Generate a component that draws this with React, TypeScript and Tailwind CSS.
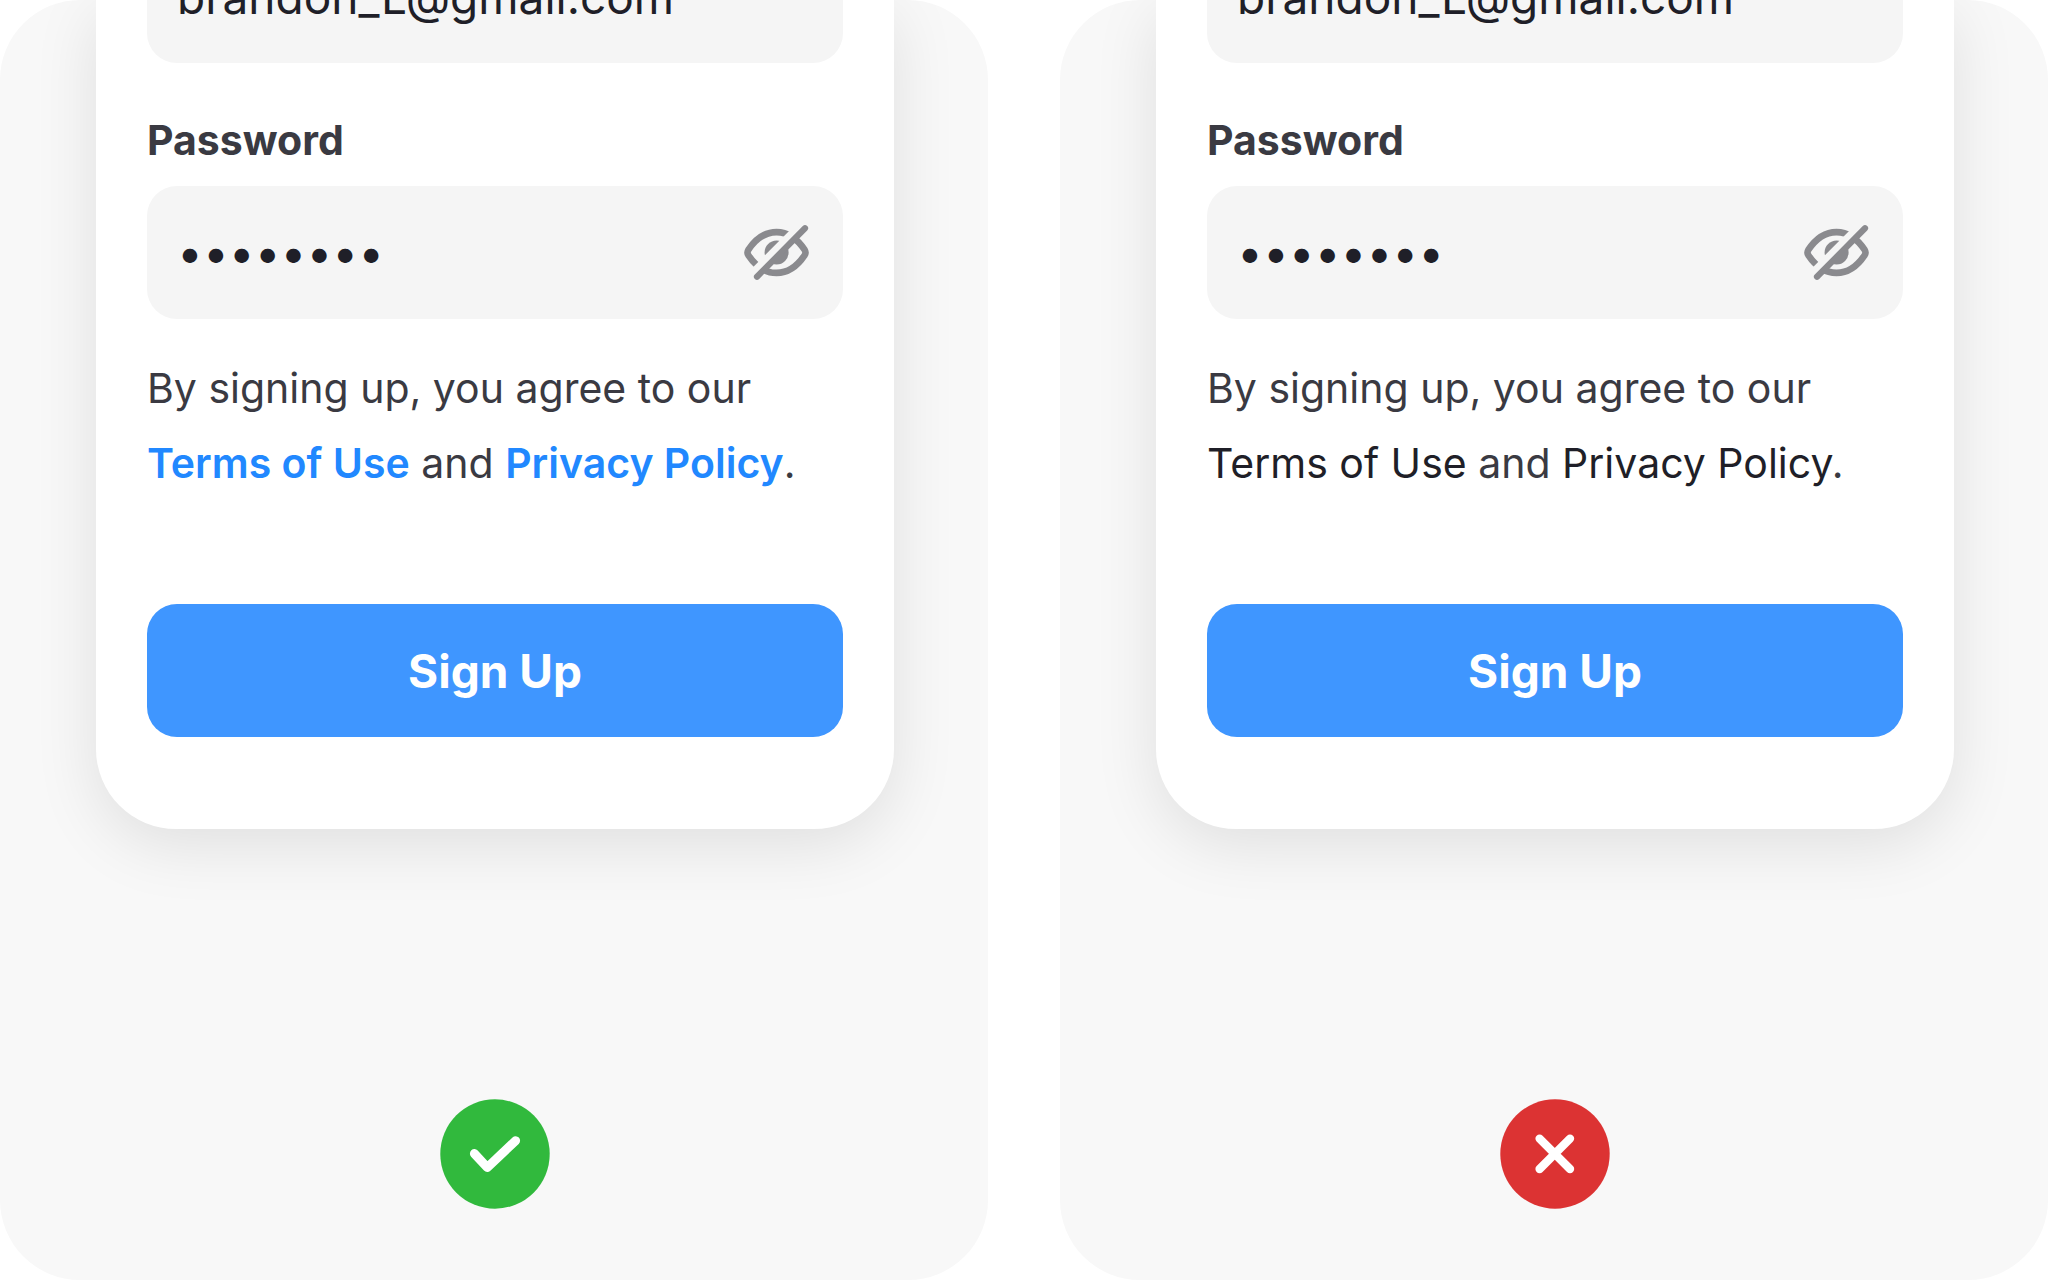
import React, { useId, useState } from 'react';

function EyeOffIcon() {
  const maskId = useId();

  return (
    <svg viewBox="0 0 66 56" className="h-14 w-[66px]" fill="none" aria-hidden="true">
      <mask id={maskId} maskUnits="userSpaceOnUse" x="0" y="0" width="66" height="56">
        <rect width="66" height="56" fill="white" />
        <path d="M-0.3 58.2 67.5 -9.8" stroke="black" strokeWidth="9.4" />
      </mask>
      <g mask={`url(#${maskId})`}>
        <path
          d="M32.5 7.1C20.5 7.1 11.2 14.6 4.3 24.9Q2.7 27.5 4.3 30.1C11.2 40.4 20.5 47.9 32.5 47.9C44.5 47.9 53.8 40.4 60.7 30.1Q62.3 27.5 60.7 24.9C53.8 14.6 44.5 7.1 32.5 7.1Z"
          stroke="#8a8a8e"
          strokeWidth="6.6"
        />
        <circle cx="32.6" cy="27.4" r="12" fill="#8a8a8e" />
      </g>
      <path d="M13 51.7 61 3.3" stroke="#8a8a8e" strokeWidth="6.2" strokeLinecap="round" />
    </svg>
  );
}

function CheckBadge() {
  return (
    <svg viewBox="0 0 110 110" className="size-[110px]" fill="none" role="img" aria-label="Do">
      <circle cx="55" cy="55" r="54.7" fill="#31b93d" />
      <path d="M34.4 54.6 47.3 68.5 75.6 41.7" stroke="white" strokeWidth="9" strokeLinecap="round" strokeLinejoin="round" />
    </svg>
  );
}

function CrossBadge() {
  return (
    <svg viewBox="0 0 110 110" className="size-[110px]" fill="none" role="img" aria-label="Don't">
      <circle cx="55" cy="55" r="54.7" fill="#dc3333" />
      <path d="M39.6 39.6 70 70M70 39.6 39.6 70" stroke="white" strokeWidth="8.4" strokeLinecap="round" />
    </svg>
  );
}

function SignUpForm({ highlightLinks }: { highlightLinks: boolean }) {
  const passwordId = useId();
  const [visible, setVisible] = useState(false);
  const linkClass = highlightLinks ? 'font-semibold text-[#2188ff]' : 'text-[#1f1f28]';

  return (
    <form
      className="overflow-hidden rounded-b-[80px] bg-white px-[51px] pb-[92px] shadow-[0_16px_64px_rgba(0,0,0,0.1)]"
      onSubmit={(e) => e.preventDefault()}
    >
      {/* The email field runs off the top edge of the card */}
      <input
        type="email"
        aria-label="Email"
        defaultValue="brandon_L@gmail.com"
        className="-mt-[70px] block h-[133px] w-full rounded-[30px] bg-[#f5f5f5] px-[30px] text-[46px] text-[#1f1f28] outline-none"
      />

      <label htmlFor={passwordId} className="mt-[53px] block text-[41px] leading-[48px] font-bold text-[#3a3a42]">
        Password
      </label>
      <div className="mt-[22px] flex h-[133px] items-center rounded-[30px] bg-[#f5f5f5] pr-[33px] pl-[30px]">
        <input
          id={passwordId}
          type={visible ? 'text' : 'password'}
          defaultValue="12345678"
          className="h-full min-w-0 flex-1 bg-transparent pb-0.5 text-[46px] text-[#1f1f28] outline-none"
        />
        <button type="button" aria-label="Show password" onClick={() => setVisible(!visible)}>
          <EyeOffIcon />
        </button>
      </div>

      <p className="mt-8 text-[41px] leading-[75px] text-[#3a3a42]">
        By signing up, you agree to our
        <br />
        <a href="#terms" className={linkClass}>Terms of Use</a> and{' '}
        <a href="#privacy" className={linkClass}>Privacy Policy</a>.
      </p>

      <button
        type="submit"
        className="mt-[103px] block h-[133px] w-full rounded-[30px] bg-[#3f96ff] pt-0.5 text-[46px] font-bold text-white"
      >
        Sign Up
      </button>
    </form>
  );
}

function Panel({ good }: { good: boolean }) {
  return (
    <section className="flex min-w-0 flex-1 flex-col overflow-hidden rounded-[80px] bg-[#f8f8f8] pr-[94px] pb-[71px] pl-24">
      <SignUpForm highlightLinks={good} />
      <div className="mt-auto flex justify-center pt-24">
        {good ? <CheckBadge /> : <CrossBadge />}
      </div>
    </section>
  );
}

export default function App() {
  return (
    <main className="flex min-h-screen gap-[72px] bg-white font-['Inter',sans-serif]">
      <Panel good />
      <Panel good={false} />
    </main>
  );
}
